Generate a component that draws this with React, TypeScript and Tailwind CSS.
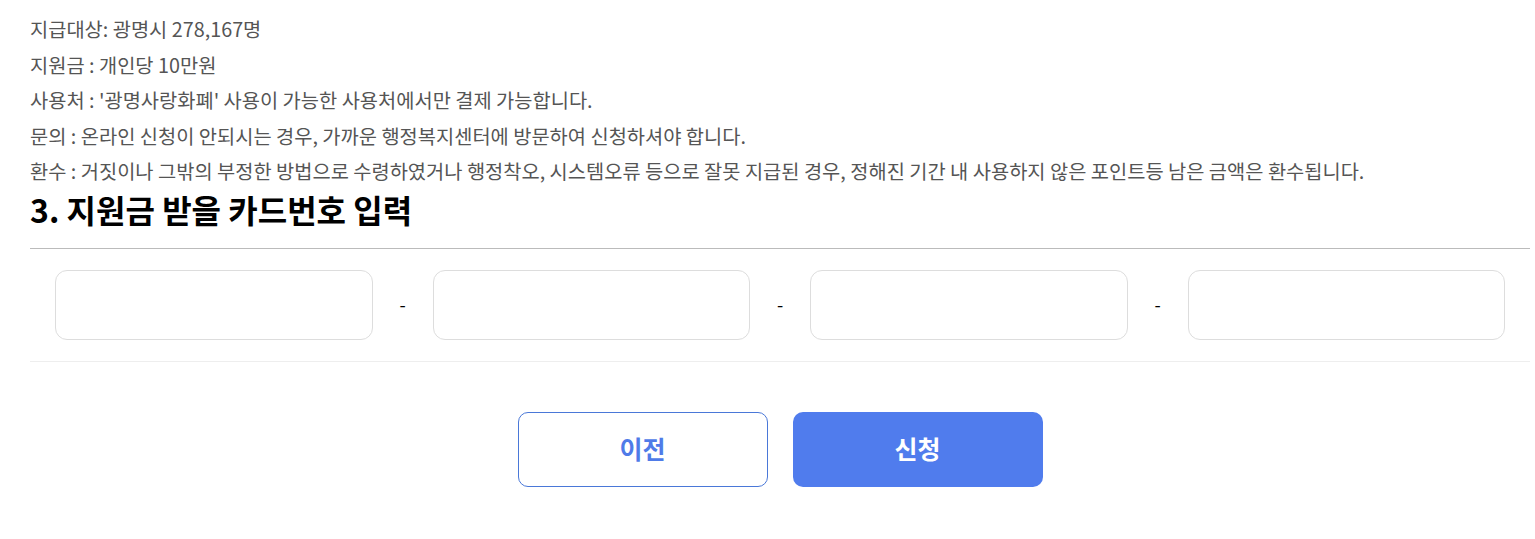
const FONT = "font-['Noto_Sans_CJK_KR','Noto_Sans',sans-serif]";

const INFO = [
  "지급대상: 광명시 278,167명",
  "지원금 : 개인당 10만원",
  "사용처 : '광명사랑화폐' 사용이 가능한 사용처에서만 결제 가능합니다.",
  "문의 : 온라인 신청이 안되시는 경우, 가까운 행정복지센터에 방문하여 신청하셔야 합니다.",
  "환수 : 거짓이나 그밖의 부정한 방법으로 수령하였거나 행정착오, 시스템오류 등으로 잘못 지급된 경우, 정해진 기간 내 사용하지 않은 포인트등 남은 금액은 환수됩니다.",
];

function CardInput() {
  return (
    <input
      type="text"
      maxLength={4}
      className="h-[70px] min-w-0 flex-1 rounded-[12px] border border-[#dddddd] bg-white px-4 text-lg outline-none"
    />
  );
}

function Dash() {
  return <span className="w-[60px] shrink-0 text-center text-[18px] text-black">-</span>;
}

export default function App() {
  return (
    <div className={`${FONT} min-h-screen bg-white pt-[11px] pl-[30px] pr-[5px]`}>
      <div className="text-[19.8px] leading-[35.5px] text-[#555555]">
        {INFO.map((line) => (
          <p key={line}>{line}</p>
        ))}
      </div>
      <h3 className="text-[32px] font-bold leading-[40px] text-black">3. 지원금 받을 카드번호 입력</h3>

      <div className="mt-[19px] border-t border-[#bbbbbb]">
        <div className="flex items-center border-b border-[#eeeeee] px-[25px] py-[21px]">
          <CardInput />
          <Dash />
          <CardInput />
          <Dash />
          <CardInput />
          <Dash />
          <CardInput />
        </div>
      </div>

      <div className="mt-[50px] flex justify-center gap-[25px]">
        <button
          type="button"
          className="h-[75px] w-[250px] rounded-[10px] border border-[#4a78d8] bg-white text-[25px] font-bold text-[#4f7be8]"
        >
          이전
        </button>
        <button
          type="button"
          className="h-[75px] w-[250px] rounded-[10px] bg-[#507ced] text-[25px] font-bold text-white"
        >
          신청
        </button>
      </div>
    </div>
  );
}
